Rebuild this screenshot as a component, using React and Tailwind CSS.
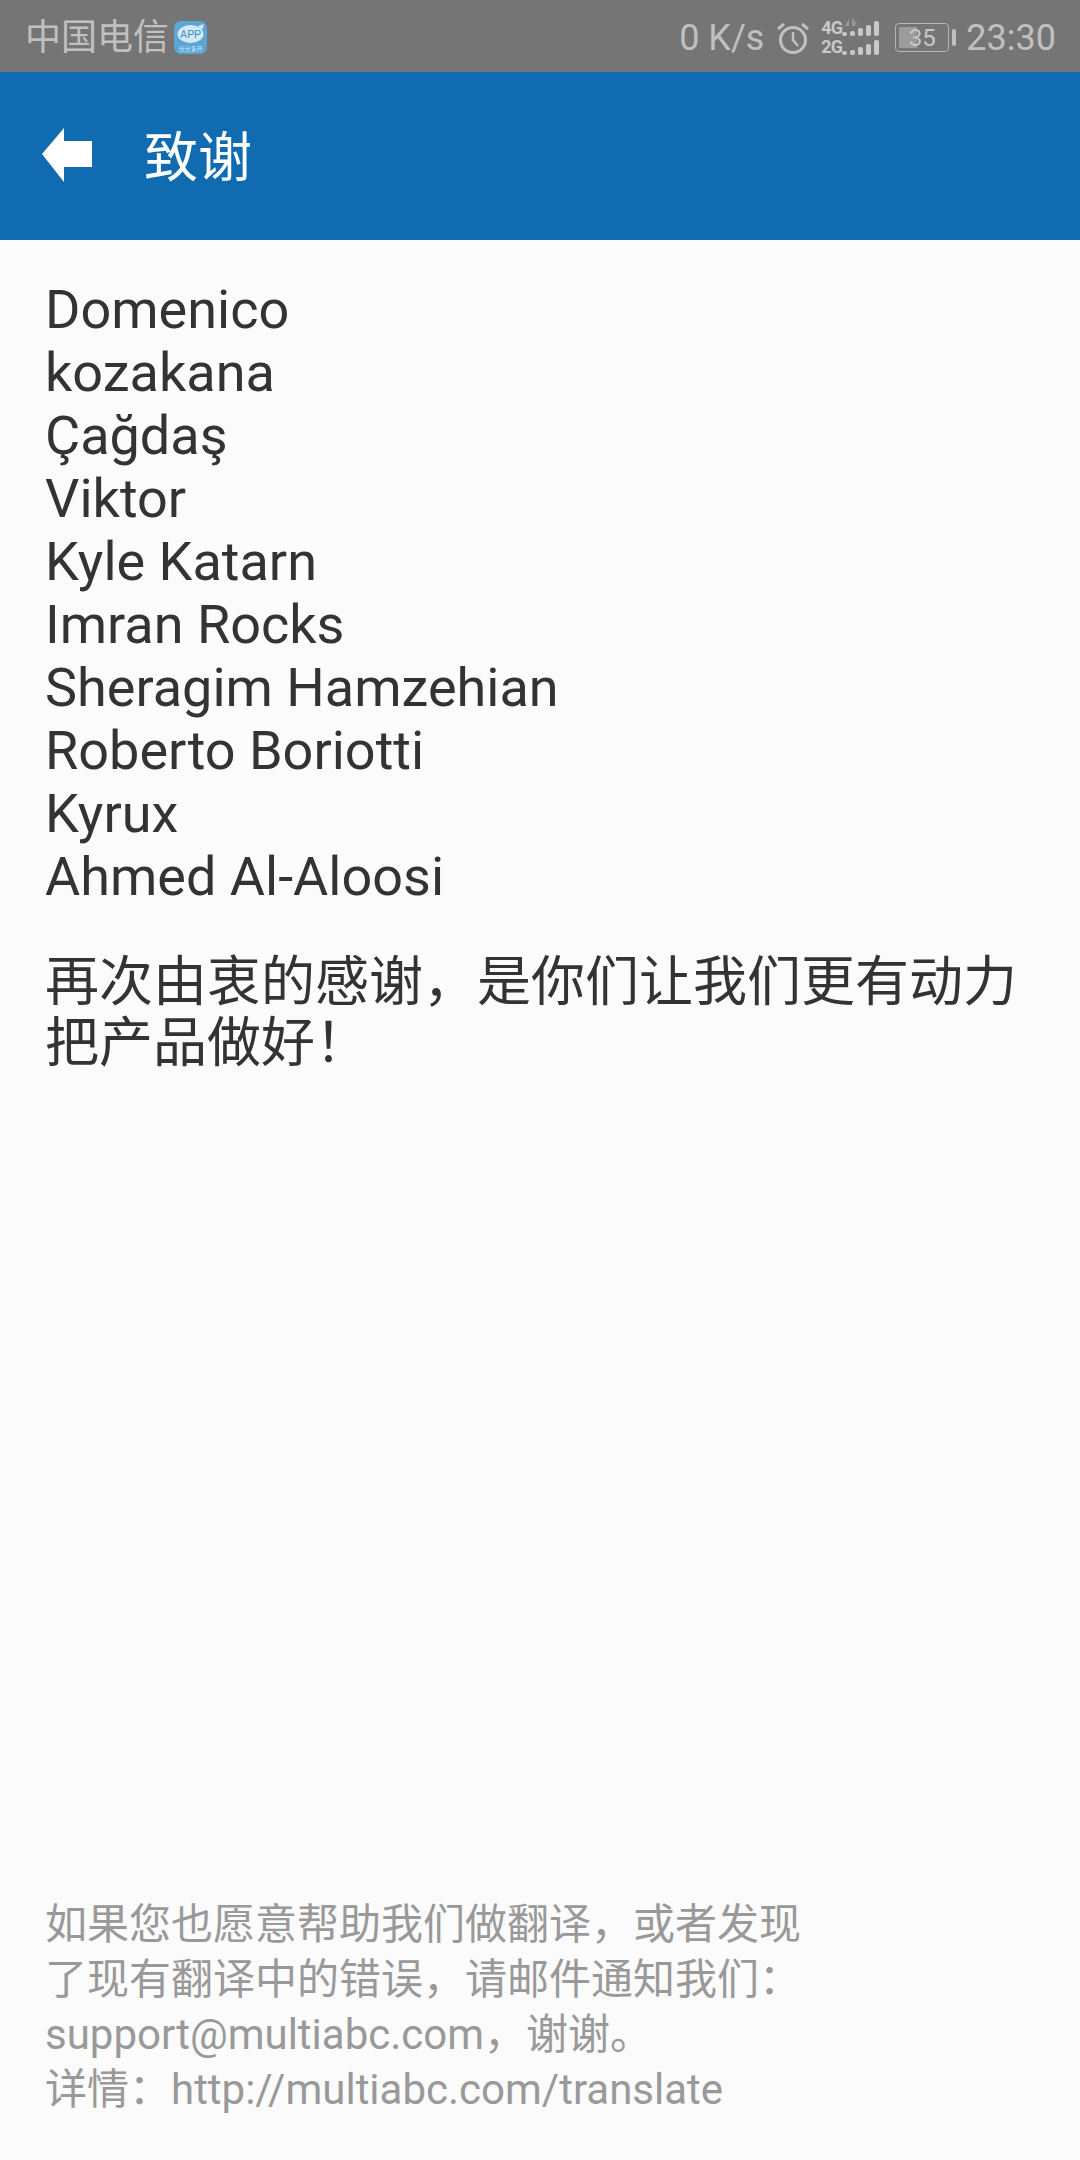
import React from "react";

const names = [
  "Domenico",
  "kozakana",
  "Çağdaş",
  "Viktor",
  "Kyle Katarn",
  "Imran Rocks",
  "Sheragim Hamzehian",
  "Roberto Boriotti",
  "Kyrux",
  "Ahmed Al-Aloosi",
];

const font = "font-['Roboto','Noto_Sans_CJK_SC',sans-serif]";

function AppBadge() {
  return (
    <svg width="33" height="33" viewBox="0 0 33 33" className="ml-[5px]">
      <rect width="33" height="33" rx="7" fill="#5ba6d6" />
      <ellipse cx="16.5" cy="13" rx="13" ry="9" fill="#d6e8f3" />
      <path d="M24 5l6-2-2 6z" fill="#d6e8f3" />
      <text x="16.5" y="17" textAnchor="middle" fontSize="11" fill="#3f8fc4" fontFamily="Roboto">
        APP
      </text>
      <text x="16.5" y="30" textAnchor="middle" fontSize="6" fill="#d6e8f3" fontFamily="Noto Sans CJK SC">
        分分多开
      </text>
    </svg>
  );
}

function AlarmIcon() {
  return (
    <svg width="34" height="34" viewBox="0 0 34 34" fill="none" stroke="#c0c0c0" strokeWidth="3">
      <circle cx="17" cy="19" r="12.5" />
      <path d="M17 11v8l5 6" strokeWidth="2.5" />
      <path d="M2 8l6-5M32 8l-6-5" />
    </svg>
  );
}

function SignalRow({ label, arrows }) {
  const bars = [4, 5, 8, 11, 15];
  return (
    <div className="relative flex items-end h-[16px]">
      <span className="w-[23px] text-[18px] leading-[16px] font-bold tracking-[-1px] text-[#c8c8c8]">{label}</span>
      <div className="flex items-end gap-[3px]">
        {bars.map((h) => (
          <svg key={h} width="5" height={h} viewBox={`0 0 5 ${h}`}>
            <rect width="5" height={h} rx="2" fill="#c8c8c8" />
          </svg>
        ))}
      </div>
      {arrows && (
        <svg width="13" height="9" viewBox="0 0 13 9" className="absolute left-[24px] top-[-2px]">
          <path d="M0 8l4-7v7zM7 1h2v4l3-3-2 6H7z" fill="#9a9a9a" />
        </svg>
      )}
    </div>
  );
}

function SignalIcon() {
  return (
    <div className="w-[58px] flex flex-col gap-[3px]">
      <SignalRow label="4G" arrows />
      <SignalRow label="2G" />
    </div>
  );
}

function Battery() {
  return (
    <div className="flex items-center">
      <div className="relative w-[54px] h-[29px] rounded-[4px] border border-[#b5b5b5] flex items-center justify-center">
        <div className="absolute left-[3px] top-[3px] bottom-[3px] w-[18px] bg-[#9c9c9c]" />
        <span className="relative text-[24px] leading-none text-[#c8c8c8]">35</span>
      </div>
      <div className="ml-[3px] w-[4px] h-[17px] rounded-full bg-[#c0c0c0]" />
    </div>
  );
}

export default function App() {
  return (
    <div className={`${font} w-[1080px] h-[2160px] flex flex-col bg-[#fbfbfb]`}>
      {/* status bar */}
      <div className="h-[72px] bg-[#757575] flex items-center justify-between pl-[25px] pr-[24px] pt-[3px] text-[#c0c0c0]">
        <div className="flex items-center">
          <span className="text-[36px] leading-none">中国电信</span>
          <AppBadge />
        </div>
        <div className="flex items-center">
          <span className="text-[36px] leading-none">0 K/s</span>
          <div className="ml-[12px] mr-[11px]">
            <AlarmIcon />
          </div>
          <SignalIcon />
          <div className="ml-[16px] mr-[10px]">
            <Battery />
          </div>
          <span className="text-[36px] leading-none">23:30</span>
        </div>
      </div>

      {/* header */}
      <div className="h-[168px] bg-[#106bb0] flex items-center pl-[42px]">
        <svg width="50" height="54" viewBox="0 0 50 54" className="mt-[-2px]">
          <path d="M0 26L22 0V13H50V39H22V54Z" fill="#fff" />
        </svg>
        <span className="ml-[52px] text-[54px] leading-none text-white pt-[6px]">致谢</span>
      </div>

      {/* content */}
      <div className="flex-1 flex flex-col pl-[45px] pr-[40px] pt-[38px] pb-[43px]">
        <div className="text-[54px] leading-[63px] text-[#333333]">
          {names.map((n) => (
            <div key={n}>{n}</div>
          ))}
        </div>
        <p className="mt-[44px] text-[54px] leading-[61px] text-[#333333]">
          再次由衷的感谢，是你们让我们更有动力把产品做好！
        </p>
        <div className="mt-auto text-[42px] leading-[55px] text-[#999999]">
          <div>如果您也愿意帮助我们做翻译，或者发现</div>
          <div>了现有翻译中的错误，请邮件通知我们：</div>
          <div>support@multiabc.com，谢谢。</div>
          <div>详情：http://multiabc.com/translate</div>
        </div>
      </div>
    </div>
  );
}
